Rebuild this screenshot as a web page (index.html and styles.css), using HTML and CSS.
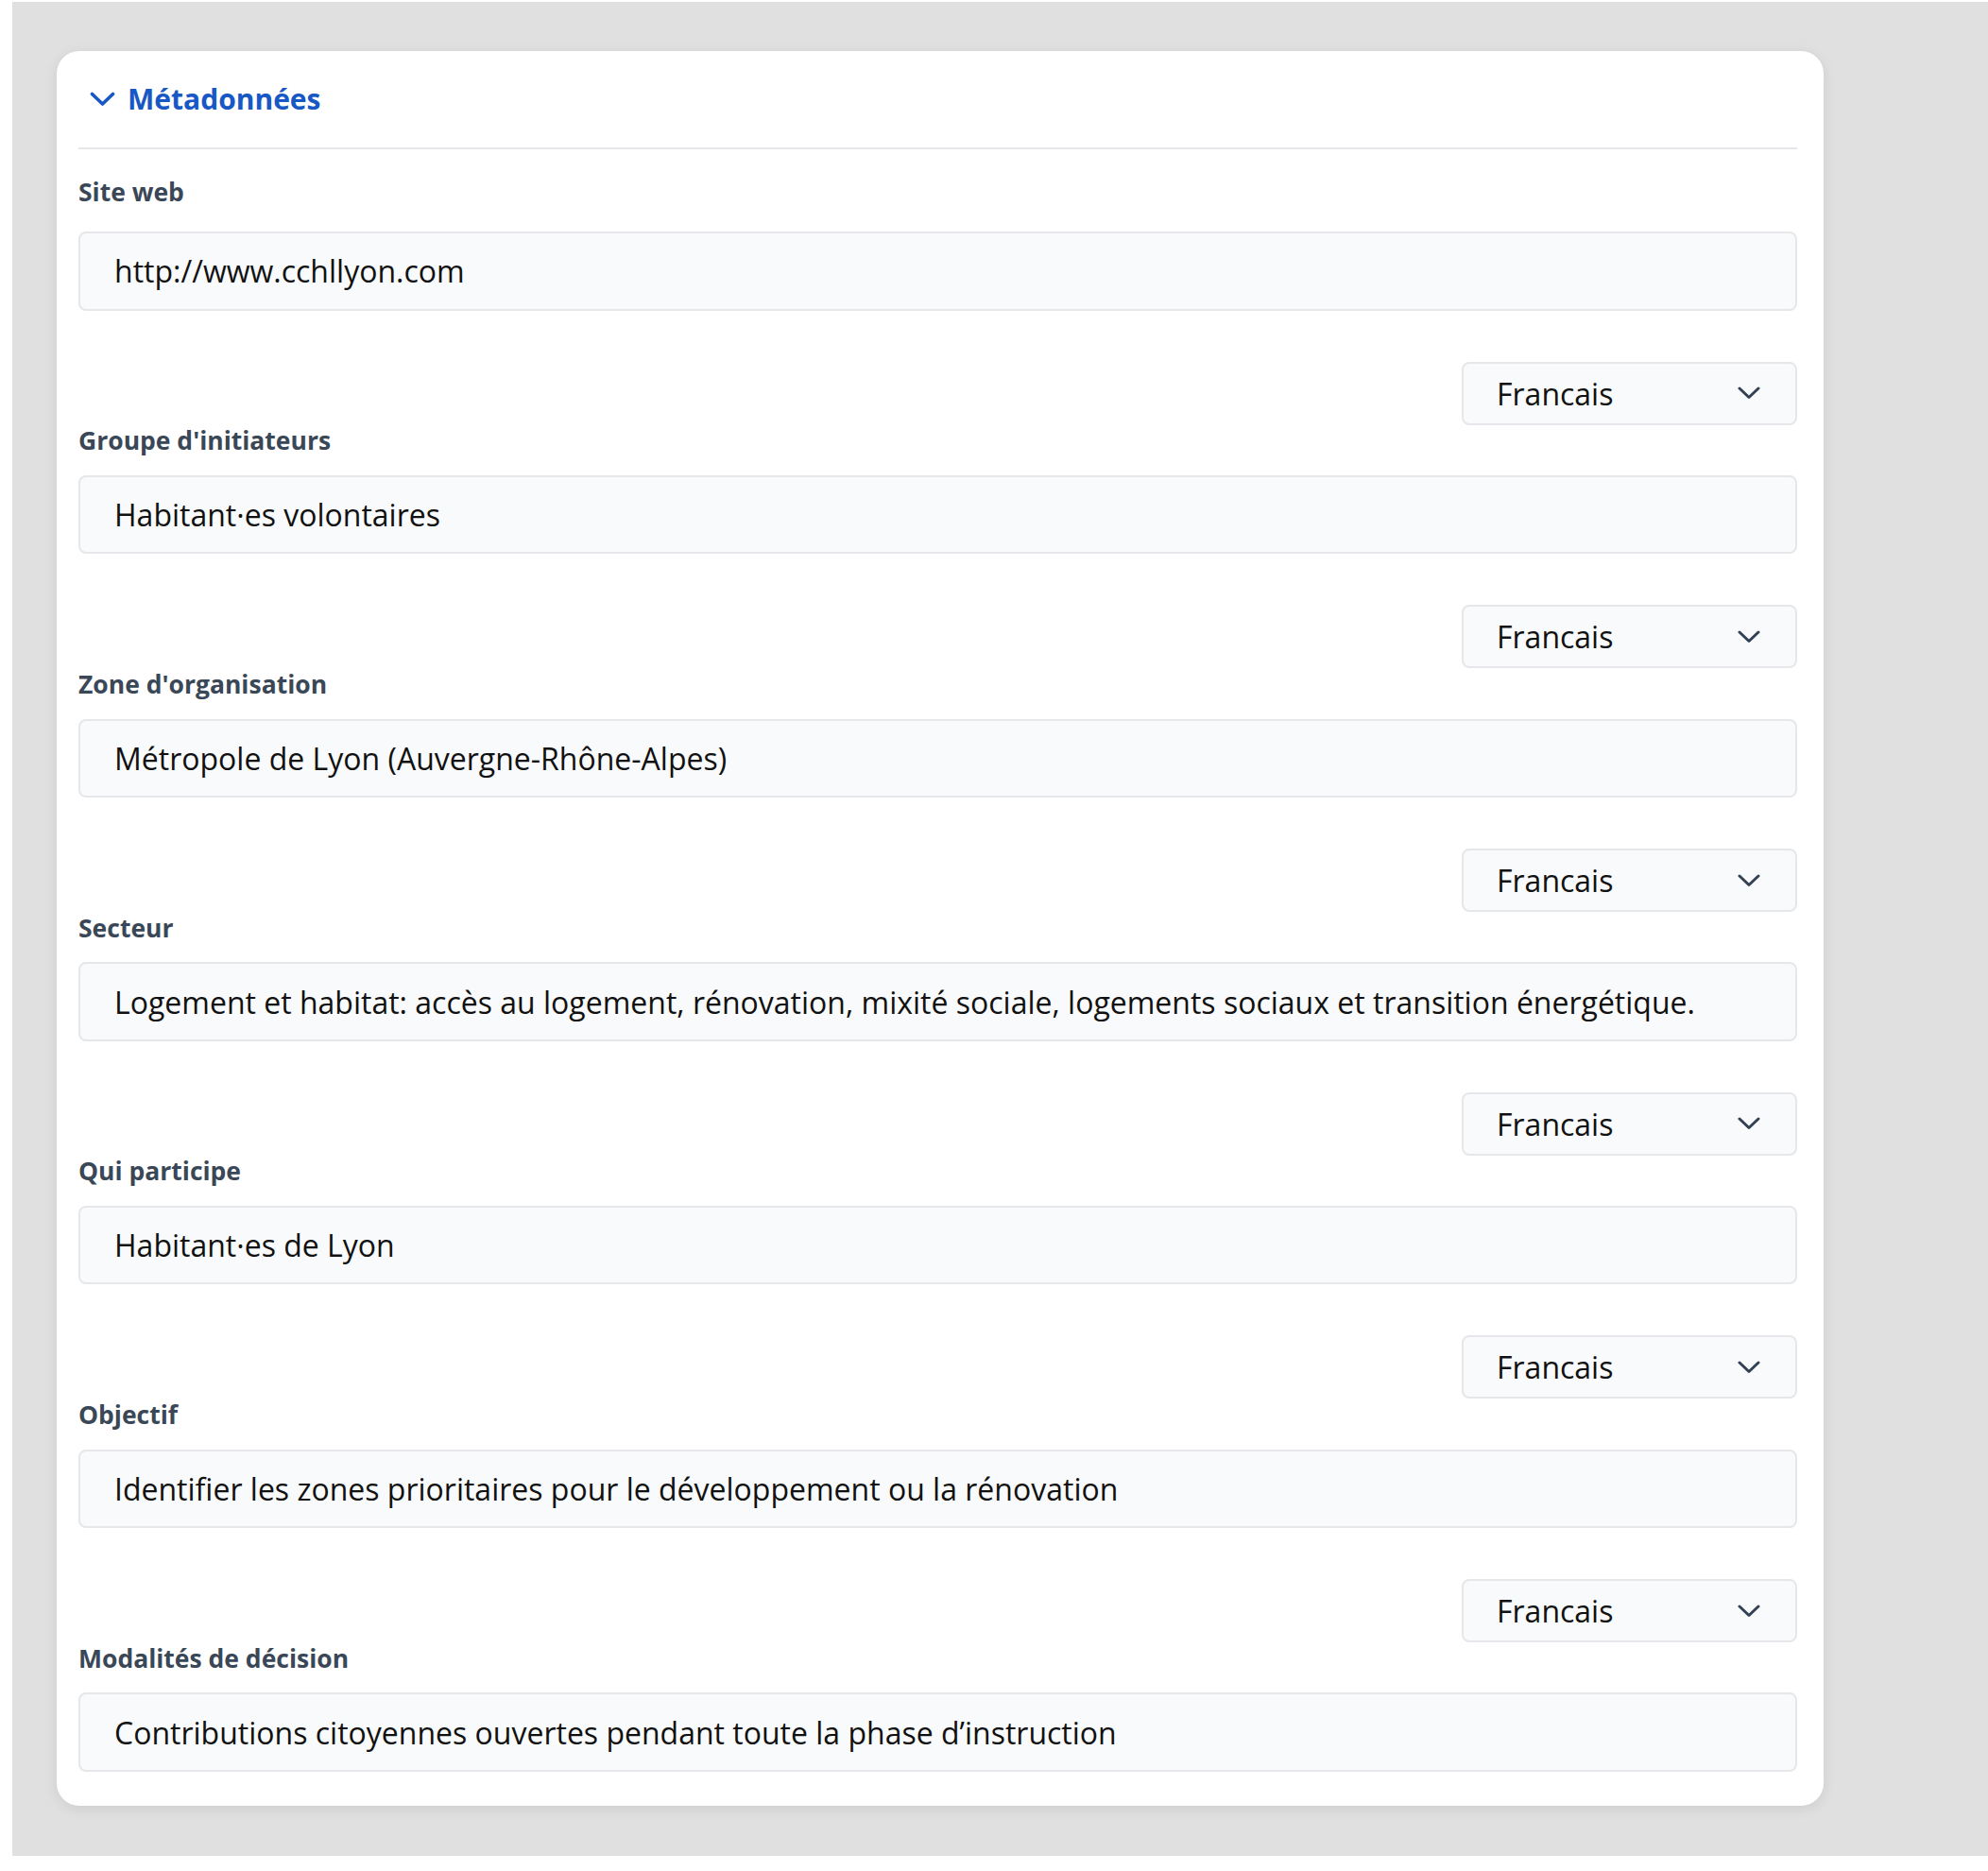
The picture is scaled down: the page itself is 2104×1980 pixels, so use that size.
FILE: index.html
```html
<!DOCTYPE html>
<html lang="fr">
<head>
    <meta charset="UTF-8">
    <meta name="viewport" content="width=device-width, initial-scale=1.0">
    <title>Métadonnées</title>
    <link rel="stylesheet" href="styles.css">
</head>
<body>
    <div class="page">
        <section class="card">
            <div class="card-header">
                <svg class="header-chevron" width="27" height="16" viewBox="0 0 27 16">
                    <polyline points="2.5,2.5 13.5,13 24.5,2.5" />
                </svg>
                <h2 class="card-title">Métadonnées</h2>
            </div>

            <div class="field field-first">
                <label class="field-label">Site web</label>
                <input class="field-input" type="text" value="http://www.cchllyon.com" readonly>
            </div>

            <div class="field">
                <div class="field-lang">
                    <button class="lang-select" type="button">
                        <span>Francais</span>
                        <svg width="24" height="14" viewBox="0 0 24 14"><polyline points="2,2 12,11.5 22,2" /></svg>
                    </button>
                </div>
                <label class="field-label">Groupe d'initiateurs</label>
                <input class="field-input" type="text" value="Habitant·es volontaires" readonly>
            </div>

            <div class="field">
                <div class="field-lang">
                    <button class="lang-select" type="button">
                        <span>Francais</span>
                        <svg width="24" height="14" viewBox="0 0 24 14"><polyline points="2,2 12,11.5 22,2" /></svg>
                    </button>
                </div>
                <label class="field-label">Zone d'organisation</label>
                <input class="field-input" type="text" value="Métropole de Lyon (Auvergne-Rhône-Alpes)" readonly>
            </div>

            <div class="field">
                <div class="field-lang">
                    <button class="lang-select" type="button">
                        <span>Francais</span>
                        <svg width="24" height="14" viewBox="0 0 24 14"><polyline points="2,2 12,11.5 22,2" /></svg>
                    </button>
                </div>
                <label class="field-label">Secteur</label>
                <input class="field-input" type="text" value="Logement et habitat: accès au logement, rénovation, mixité sociale, logements sociaux et transition énergétique." readonly>
            </div>

            <div class="field">
                <div class="field-lang">
                    <button class="lang-select" type="button">
                        <span>Francais</span>
                        <svg width="24" height="14" viewBox="0 0 24 14"><polyline points="2,2 12,11.5 22,2" /></svg>
                    </button>
                </div>
                <label class="field-label">Qui participe</label>
                <input class="field-input" type="text" value="Habitant·es de Lyon" readonly>
            </div>

            <div class="field">
                <div class="field-lang">
                    <button class="lang-select" type="button">
                        <span>Francais</span>
                        <svg width="24" height="14" viewBox="0 0 24 14"><polyline points="2,2 12,11.5 22,2" /></svg>
                    </button>
                </div>
                <label class="field-label">Objectif</label>
                <input class="field-input" type="text" value="Identifier les zones prioritaires pour le développement ou la rénovation" readonly>
            </div>

            <div class="field">
                <div class="field-lang">
                    <button class="lang-select" type="button">
                        <span>Francais</span>
                        <svg width="24" height="14" viewBox="0 0 24 14"><polyline points="2,2 12,11.5 22,2" /></svg>
                    </button>
                </div>
                <label class="field-label">Modalités de décision</label>
                <input class="field-input" type="text" value="Contributions citoyennes ouvertes pendant toute la phase d’instruction" readonly>
            </div>
        </section>
    </div>
</body>
</html>
```

FILE: styles.css
```css
body {
    margin: 0;
    background: #ffffff;
    font-family: 'Open Sans', 'Noto Sans', sans-serif;
}

.page {
    margin: 2px 0 0 13px;
    height: 1962px;
    box-sizing: border-box;
    padding: 52px 0 0 47px;
    background: #e0e0e0;
}

.card {
    width: 1870px;
    box-sizing: border-box;
    padding: 0 28px 36.5px 23px;
    background: #fff;
    border-radius: 24px;
    box-shadow: 0 3px 14px rgba(0, 0, 0, 0.09);
}

.card-header {
    display: flex;
    align-items: center;
    gap: 13px;
    padding: 31px 12px;
    border-bottom: 2px solid #e5e7eb;
}

.header-chevron polyline {
    fill: none;
    stroke: #1758c4;
    stroke-width: 3.6;
    stroke-linecap: round;
    stroke-linejoin: round;
}

.card-title {
    margin: 0;
    font-size: 30px;
    line-height: 40px;
    font-weight: 700;
    color: #1758c4;
}

.field {
    display: flex;
    flex-direction: column;
}

.field-lang {
    display: flex;
    justify-content: flex-end;
    margin-top: 54px;
}

.lang-select {
    display: flex;
    align-items: center;
    justify-content: space-between;
    width: 355px;
    height: 67px;
    box-sizing: border-box;
    padding: 0 37px 0 35px;
    border: 2px solid #e5e7eb;
    border-radius: 8px;
    background: #f9fafb;
    font-family: inherit;
    font-size: 32px;
    color: #111;
    cursor: pointer;
}

.lang-select polyline {
    fill: none;
    stroke: #334155;
    stroke-width: 3;
    stroke-linecap: round;
    stroke-linejoin: round;
}

.field-label {
    margin: 1.5px 0 21.7px;
    font-size: 26.5px;
    line-height: 30px;
    font-weight: 700;
    color: #3a4757;
}

.field-first .field-label {
    margin: 29.7px 0 27.5px;
}

.field-input {
    height: 83.5px;
    box-sizing: border-box;
    padding: 0 36px;
    border: 2px solid #e5e7eb;
    border-radius: 8px;
    background: #f9fafb;
    font-family: inherit;
    font-size: 32px;
    color: #111;
    outline: none;
}
```
